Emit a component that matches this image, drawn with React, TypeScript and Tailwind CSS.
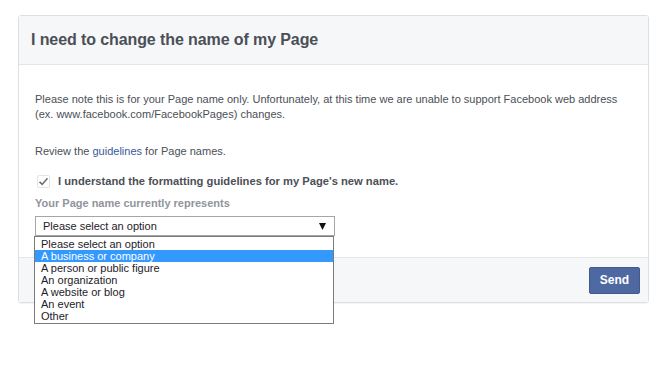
import React from 'react';

const options = [
  'Please select an option',
  'A business or company',
  'A person or public figure',
  'An organization',
  'A website or blog',
  'An event',
  'Other',
];

export default function App() {
  return (
    <div className="w-[663px] h-[367px] bg-white pt-[15px] pl-[18px] font-['Liberation_Sans',Arial,sans-serif]">
      <div className="w-[631px] border border-[#dddfe2] rounded-[3px] shadow-[0_1px_1px_rgba(0,0,0,0.05)]">
        <div className="h-[49px] bg-[#f6f7f9] border-b border-[#e5e5e5] flex items-center pl-[12px]">
          <h2 className="text-[16px] font-bold text-[#4b4f56] tracking-[-0.1px]">
            I need to change the name of my Page
          </h2>
        </div>

        <div className="pl-[16px] pt-[27px] pb-[21px] text-[11px] leading-[15px] text-[#4b4f56]">
          <p>
            Please note this is for your Page name only. Unfortunately, at this time we are unable to support Facebook web address
            <br />
            (ex. www.facebook.com/FacebookPages) changes.
          </p>
          <p className="mt-[22px]">
            Review the <span className="text-[#365899]">guidelines</span> for Page names.
          </p>

          <div className="mt-[14px] flex items-center h-[16px] pl-[2px]">
            <span className="w-[13px] h-[13px] border border-[#e4e4e4] rounded-[2px] flex items-center justify-center bg-white">
              <svg width="11" height="11" viewBox="0 0 11 11">
                <path d="M1.5 5.8 L4.2 8.4 L9.5 2.3" fill="none" stroke="#6b6f76" strokeWidth="1.6" />
              </svg>
            </span>
            <span className="ml-[8px] text-[11.2px] font-bold text-[#4b4f56]">
              I understand the formatting guidelines for my Page's new name.
            </span>
          </div>

          <div className="mt-[7px] text-[11px] font-bold text-[#90949c]">
            Your Page name currently represents
          </div>

          <div className="relative mt-[5px] w-[300px]">
            <div className="h-[20px] border border-[#a6a6a6] bg-white flex items-center justify-between pl-[7px] pr-[8px] text-[11px] text-[#1d2129]">
              <span>Please select an option</span>
              <svg width="7" height="7" viewBox="0 0 8 8">
                <path d="M0 0 H8 L4 8 Z" fill="#111" />
              </svg>
            </div>
            <div className="absolute left-[-1px] top-[20px] w-[300px] bg-white border border-[#7a7a7a] py-[1px] z-10">
              {options.map((o, i) => (
                <div
                  key={o}
                  className={`h-[12px] leading-[12px] pl-[6px] text-[11px] ${
                    i === 1 ? 'bg-[#3399ff] text-white' : 'text-[#1d2129]'
                  }`}
                >
                  {o}
                </div>
              ))}
            </div>
          </div>
        </div>

        <div className="h-[45px] bg-[#f6f7f9] border-t border-[#e5e5e5] flex items-center justify-end pr-[8px]">
          <button className="w-[51px] h-[27px] bg-[#4e69a2] border border-[#435a8b] rounded-[2px] text-white text-[12px] font-bold">
            Send
          </button>
        </div>
      </div>
    </div>
  );
}
